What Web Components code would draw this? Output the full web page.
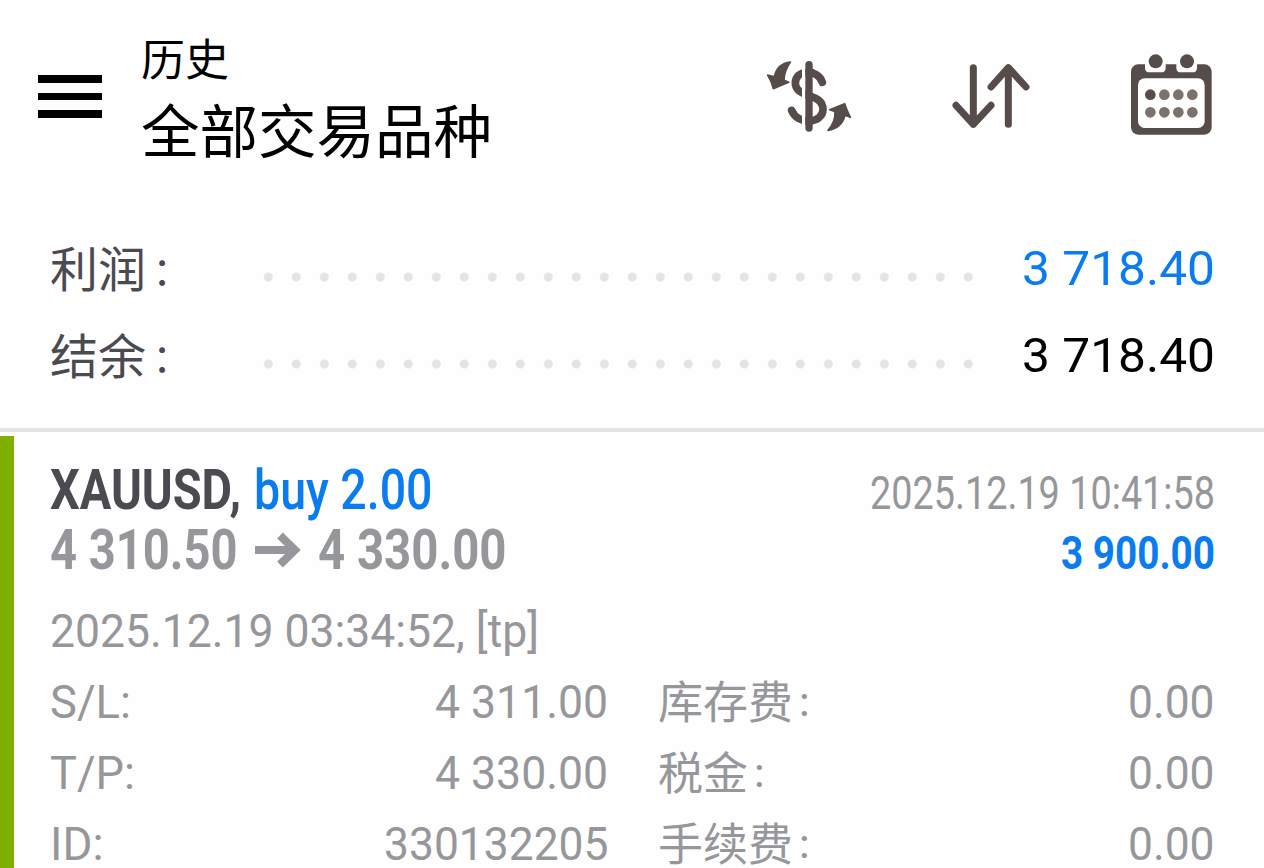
<!DOCTYPE html>
<html lang="zh-CN">
<head>
<meta charset="utf-8">
<title>历史</title>
<style>
html, body {
    margin: 0;
    height: 100%;
    overflow: hidden;
    background: #fefefe;
}
body {
    font-family: Roboto, "Noto Sans CJK SC", sans-serif;
}
</style>
</head>
<body>
<history-screen></history-screen>

<script>
// Text squeezed or stretched to a fixed width
class FitText extends HTMLElement {
    constructor() {
        super();
        this.attachShadow({ mode: 'open' }).innerHTML = `
            <style>
                :host { display: inline-block; white-space: nowrap; flex: none; }
                span { display: inline-block; transform-origin: 0 0; }
            </style>
            <span><slot></slot></span>
        `;
    }

    connectedCallback() {
        const width = Number(this.getAttribute('width'));
        const span = this.shadowRoot.querySelector('span');
        this.style.width = width + 'px';
        span.style.transform = `scaleX(${width / span.getBoundingClientRect().width})`;
    }
}

const ICONS = {
    currency: `
        <path d="M217 127C205 86 136 86 136 130C136 174 219 158 219 208C219 252 142 256 125 211" fill="none" stroke="currentColor" stroke-width="23" stroke-linecap="round"/>
        <path d="M156 76H166V262H156Z" fill="#fefefe"/>
        <path d="M177 74V264" stroke="currentColor" stroke-width="22" stroke-linecap="round"/>
        <g fill="currentColor" stroke="currentColor" stroke-width="5" stroke-linejoin="round">
            <path d="M121 66C94 69 78 86 73 110Q64 109 53 105Q65 124 70 146Q90 138 116 127Q110 124 102 121C102 100 109 84 121 66Z"/>
            <path d="M234 271C251 252 256 236 255 215Q249 212 239 209Q262 200 284 191Q291 212 301 232Q294 228 285 226C279 250 261 267 234 271Z"/>
        </g>`,
    sort: `
        <g fill="none" stroke="currentColor" stroke-width="21" stroke-linecap="round" stroke-linejoin="round">
            <path d="M130 83V253M78 196L130 253L183 196"/>
            <path d="M235 253V83M183 141L235 83L288 141"/>
        </g>`,
    calendar: `
        <rect x="63" y="73" width="242" height="211" rx="22" fill="currentColor"/>
        <path d="M105 66H167V83Q167 97 153 97H119Q105 97 105 83ZM199 66H261V83Q261 97 247 97H213Q199 97 199 83Z" fill="#fefefe"/>
        <rect x="84" y="115" width="200" height="149" rx="20" fill="#fefefe"/>
        <g fill="currentColor">
            <circle cx="137" cy="64" r="21"/><circle cx="231" cy="64" r="21"/>
            <circle cx="121" cy="164" r="16"/>
        </g>
        <g fill="#7b726e">
            <circle cx="163" cy="164" r="16"/><circle cx="205" cy="164" r="16"/><circle cx="247" cy="164" r="16"/>
            <circle cx="121" cy="217" r="16"/><circle cx="163" cy="217" r="16"/><circle cx="205" cy="217" r="16"/><circle cx="247" cy="217" r="16"/>
        </g>`
};

class ToolIcon extends HTMLElement {
    constructor() {
        super();
        this.attachShadow({ mode: 'open' });
    }

    connectedCallback() {
        this.shadowRoot.innerHTML = `
            <style>
                :host { display: block; width: 120px; height: 110px; color: #564c49; }
                svg { display: block; }
            </style>
            <svg width="120" height="110" viewBox="0 0 360 330">${ICONS[this.getAttribute('name')]}</svg>
        `;
    }
}

class AppHeader extends HTMLElement {
    constructor() {
        super();
        this.attachShadow({ mode: 'open' }).innerHTML = `
            <style>
                :host {
                    display: flex;
                    box-sizing: border-box;
                    height: 225px;
                    padding: 0 34px 0 38px;
                    color: #000;
                }
                .menu {
                    display: grid;
                    gap: 10px;
                    width: 64px;
                    height: 42.5px;
                    margin-top: 75.3px;
                }
                .menu i { background: #000; }
                .titles { margin: 29px 0 0 39px; }
                .titles div { white-space: nowrap; }
                .small { font-size: 44px; line-height: 64px; }
                .large { font-size: 58.5px; line-height: 80px; }
                .tools { display: flex; gap: 60px; margin: 40px 0 0 auto; }
            </style>
            <div class="menu"><i></i><i></i><i></i></div>
            <div class="titles">
                <div class="small"><slot name="title"></slot></div>
                <div class="large"><slot name="filter"></slot></div>
            </div>
            <div class="tools">
                <tool-icon name="currency"></tool-icon>
                <tool-icon name="sort"></tool-icon>
                <tool-icon name="calendar"></tool-icon>
            </div>
        `;
    }
}

class SummaryRow extends HTMLElement {
    constructor() {
        super();
        this.attachShadow({ mode: 'open' }).innerHTML = `
            <style>
                :host {
                    display: grid;
                    grid-template-columns: 204px 728px auto;
                    height: 87px;
                    padding: 0 52px 0 50px;
                    line-height: 87px;
                    color: #000;
                }
                :host([profit]) { color: #0a7cf0; }
                .label { font-size: 48px; color: #4b4a50; padding-top: 2px; }
                .value { font-size: 49px; text-align: right; }
                svg { display: block; margin-top: 47px; }
            </style>
            <div class="label"><slot name="label"></slot></div>
            <svg width="728" height="10"><path d="M14.3 5H715" stroke="#e4e4e4" stroke-width="9" stroke-linecap="round" stroke-dasharray="0 28"/></svg>
            <div class="value"><slot></slot></div>
        `;
    }
}

class DealCard extends HTMLElement {
    constructor() {
        super();
        this.attachShadow({ mode: 'open' }).innerHTML = `
            <style>
                :host {
                    display: block;
                    box-sizing: border-box;
                    height: 432px;
                    padding: 24px 49.5px 0 35.5px;
                    border-left: 14px solid #7fb000;
                    color: #96979b;
                    overflow: hidden;
                }
                .line { display: flex; align-items: baseline; height: 60px; line-height: 60px; font-size: 56px; }
                .end { margin-left: auto; font-size: 46px; }
                ::slotted([slot="symbol"]) { font-weight: 700; color: #4b4a50; margin-right: 13px; }
                ::slotted([slot="side"]) { font-weight: 500; color: #0a7cf0; }
                ::slotted([slot="time"]) { font-weight: 450; }
                ::slotted([slot="open"]), ::slotted([slot="close"]) { font-weight: 700; }
                ::slotted([slot="profit"]) { font-weight: 700; color: #0a7cf0; }
                .arrow { align-self: flex-start; margin: 11px 17.5px 0 17.5px; }
                .comment { height: 71px; line-height: 71px; margin-top: 16px; font-size: 46px; }
                .details { display: grid; grid-template-columns: 558.5px 1fr; column-gap: 50px; }
            </style>
            <div class="line">
                <slot name="symbol"></slot><slot name="side"></slot>
                <div class="end"><slot name="time"></slot></div>
            </div>
            <div class="line">
                <slot name="open"></slot>
                <svg class="arrow" width="46" height="38" viewBox="0 0 46 38" fill="none" stroke="currentColor" stroke-width="8"><path d="M0 19H41M25 4.5L40 19L25 33.5"/></svg>
                <slot name="close"></slot>
                <div class="end"><slot name="profit"></slot></div>
            </div>
            <div class="comment"><slot name="comment"></slot></div>
            <div class="details"><slot></slot></div>
        `;
    }
}

class DealField extends HTMLElement {
    constructor() {
        super();
        this.attachShadow({ mode: 'open' }).innerHTML = `
            <style>
                :host {
                    display: flex;
                    justify-content: space-between;
                    height: 71px;
                    line-height: 71px;
                    font-size: 46px;
                }
                :host([cjk]) .label { font-size: 45px; padding-top: 1px; }
            </style>
            <div class="label"><slot name="label"></slot></div>
            <div><slot></slot></div>
        `;
    }
}

class HistoryScreen extends HTMLElement {
    constructor() {
        super();
        this.attachShadow({ mode: 'open' }).innerHTML = `
            <style>
                :host { display: block; width: 1264px; height: 868px; overflow: hidden; background: #fefefe; }
                .summary { box-sizing: border-box; height: 207px; border-bottom: 4px solid #e4e4e4; margin-bottom: 4px; }
                .colon { display: inline-block; line-height: 1; transform-origin: 25% 60%; transform: translate(4px, 0) scale(0.8); }
                .colon.light { transform: translate(0, 0) scale(0.76); }
            </style>
            <app-header>
                <span slot="title">历史</span>
                <span slot="filter">全部交易品种</span>
            </app-header>
            <div class="summary">
                <summary-row profit><span slot="label">利润<span class="colon">：</span></span><fit-text width="193">3 718.40</fit-text></summary-row>
                <summary-row><span slot="label">结余<span class="colon">：</span></span><fit-text width="193">3 718.40</fit-text></summary-row>
            </div>
            <deal-card>
                <fit-text slot="symbol" width="191">XAUUSD,</fit-text>
                <fit-text slot="side" width="178.5">buy 2.00</fit-text>
                <fit-text slot="time" width="345">2025.12.19 10:41:58</fit-text>
                <fit-text slot="open" width="187.5">4 310.50</fit-text>
                <fit-text slot="close" width="188.5">4 330.00</fit-text>
                <fit-text slot="profit" width="154">3 900.00</fit-text>
                <fit-text slot="comment" width="489">2025.12.19 03:34:52, [tp]</fit-text>
                <deal-field><fit-text slot="label" width="81">S/L:</fit-text><fit-text width="173">4 311.00</fit-text></deal-field>
                <deal-field cjk><span slot="label">库存费<span class="colon light">：</span></span><fit-text width="86.5">0.00</fit-text></deal-field>
                <deal-field><fit-text slot="label" width="85">T/P:</fit-text><fit-text width="173">4 330.00</fit-text></deal-field>
                <deal-field cjk><span slot="label">税金<span class="colon light">：</span></span><fit-text width="86.5">0.00</fit-text></deal-field>
                <deal-field><fit-text slot="label" width="53.5">ID:</fit-text><fit-text width="224.5">330132205</fit-text></deal-field>
                <deal-field cjk><span slot="label">手续费<span class="colon light">：</span></span><fit-text width="86.5">0.00</fit-text></deal-field>
            </deal-card>
        `;
    }
}

customElements.define('tool-icon', ToolIcon);
customElements.define('app-header', AppHeader);
customElements.define('summary-row', SummaryRow);
customElements.define('deal-card', DealCard);
customElements.define('deal-field', DealField);
customElements.define('history-screen', HistoryScreen);
// Last, so that every inherited font size is in place when it measures
customElements.define('fit-text', FitText);
</script>
</body>
</html>
